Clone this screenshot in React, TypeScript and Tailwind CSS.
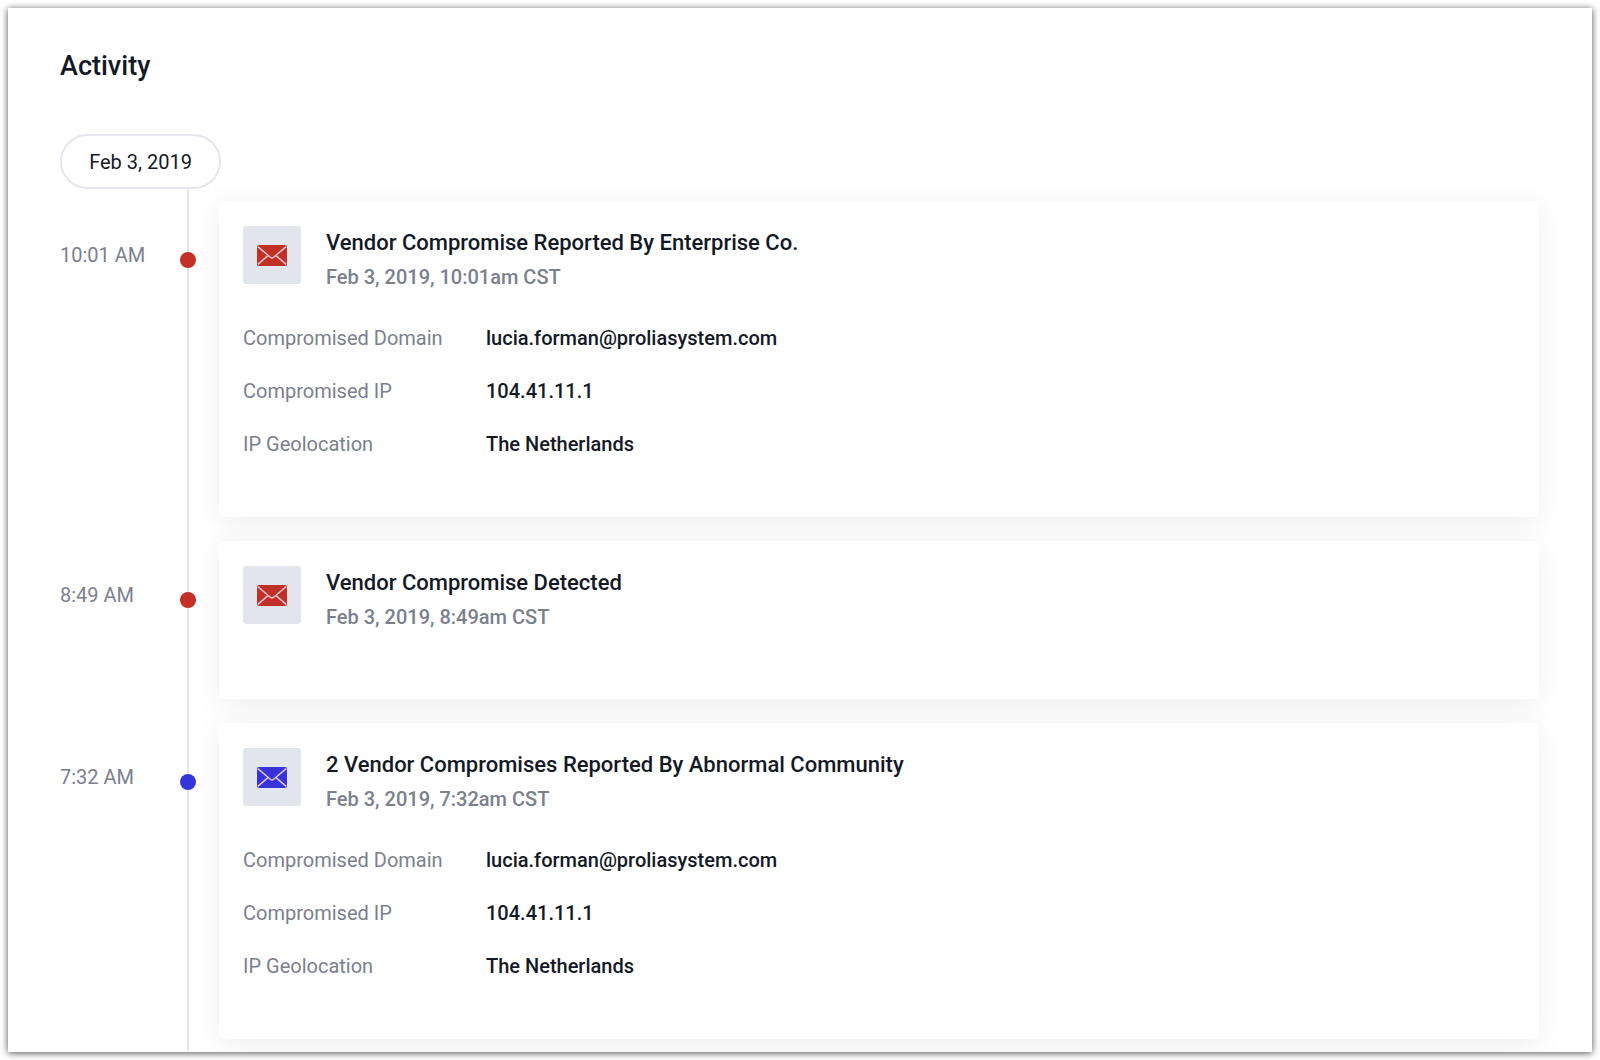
type Tone = "red" | "blue";

type Detail = { label: string; value: string };

type ActivityEvent = {
  time: string;
  title: string;
  timestamp: string;
  tone: Tone;
  details: Detail[];
};

const DETAILS: Detail[] = [
  { label: "Compromised Domain", value: "lucia.forman@proliasystem.com" },
  { label: "Compromised IP", value: "104.41.11.1" },
  { label: "IP Geolocation", value: "The Netherlands" },
];

const EVENTS: ActivityEvent[] = [
  {
    time: "10:01 AM",
    title: "Vendor Compromise Reported By Enterprise Co.",
    timestamp: "Feb 3, 2019, 10:01am CST",
    tone: "red",
    details: DETAILS,
  },
  {
    time: "8:49 AM",
    title: "Vendor Compromise Detected",
    timestamp: "Feb 3, 2019, 8:49am CST",
    tone: "red",
    details: [],
  },
  {
    time: "7:32 AM",
    title: "2 Vendor Compromises Reported By Abnormal Community",
    timestamp: "Feb 3, 2019, 7:32am CST",
    tone: "blue",
    details: DETAILS,
  },
];

const DOT_COLORS: Record<Tone, string> = {
  red: "bg-[#c12f26]",
  blue: "bg-[#3733db]",
};

const ICON_COLORS: Record<Tone, string> = {
  red: "text-[#c12f26]",
  blue: "text-[#3733db]",
};

function EnvelopeIcon({ tone }: { tone: Tone }) {
  return (
    <div className="flex size-[58px] shrink-0 items-center justify-center rounded-[3px] bg-[#e2e5ec]">
      <svg viewBox="0 0 30 21" className={`h-[21px] w-[30px] ${ICON_COLORS[tone]}`} aria-hidden="true">
        <rect width="30" height="21" rx="2" fill="currentColor" />
        <path
          d="M0.8 1.6 13.4 12.2Q15 13.6 16.6 12.2L29.2 1.6M0.8 19.4 11 10.6M29.2 19.4 19 10.6"
          fill="none"
          stroke="#e6c6cc"
          strokeWidth="1.4"
        />
      </svg>
    </div>
  );
}

function EventCard({ event }: { event: ActivityEvent }) {
  return (
    <article className="min-h-[158px] min-w-0 flex-1 rounded-md bg-white px-6 pt-[25px] pb-[46px] shadow-[0_5px_30px_rgba(0,0,0,0.07)]">
      <header className="mb-[18px] flex gap-[25px]">
        <EnvelopeIcon tone={event.tone} />
        <div className="leading-[34px] font-medium">
          <h3 className="text-[22px]">{event.title}</h3>
          <p className="text-xl leading-[34px] text-[#7b808d]">{event.timestamp}</p>
        </div>
      </header>
      {event.details.length > 0 && (
        <dl className="text-xl leading-[53px]">
          {event.details.map((d) => (
            <div key={d.label} className="flex">
              <dt className="w-[243px] shrink-0 text-[#7b808d]">{d.label}</dt>
              <dd className="font-medium">{d.value}</dd>
            </div>
          ))}
        </dl>
      )}
    </article>
  );
}

export default function App() {
  return (
    <div className="h-screen bg-white p-2 font-[Roboto,sans-serif] text-[#141926]">
      <main className="h-full overflow-hidden bg-white pt-10 pr-[53px] pl-[52px] shadow-[0_1px_7px_rgba(0,0,0,0.7)]">
        <h2 className="text-[27px] leading-9 font-medium">Activity</h2>
        <time
          dateTime="2019-02-03"
          className="mt-[50px] flex h-[55px] w-[161px] items-center justify-center rounded-full border-2 border-[#e6e7ee] text-xl"
        >
          Feb 3, 2019
        </time>
        <ol>
          {EVENTS.map((event) => (
            <li key={event.time} className="flex">
              <span className="w-[127px] shrink-0 pt-[50px] text-xl leading-8 text-[#7b808d]">{event.time}</span>
              <div className="relative mr-[30px] w-0.5 shrink-0 bg-[#e6e7ee]">
                <span className={`absolute top-[63px] left-1/2 size-4 -translate-x-1/2 rounded-full ${DOT_COLORS[event.tone]}`} />
              </div>
              <div className="flex min-w-0 flex-1 py-3">
                <EventCard event={event} />
              </div>
            </li>
          ))}
        </ol>
      </main>
    </div>
  );
}
